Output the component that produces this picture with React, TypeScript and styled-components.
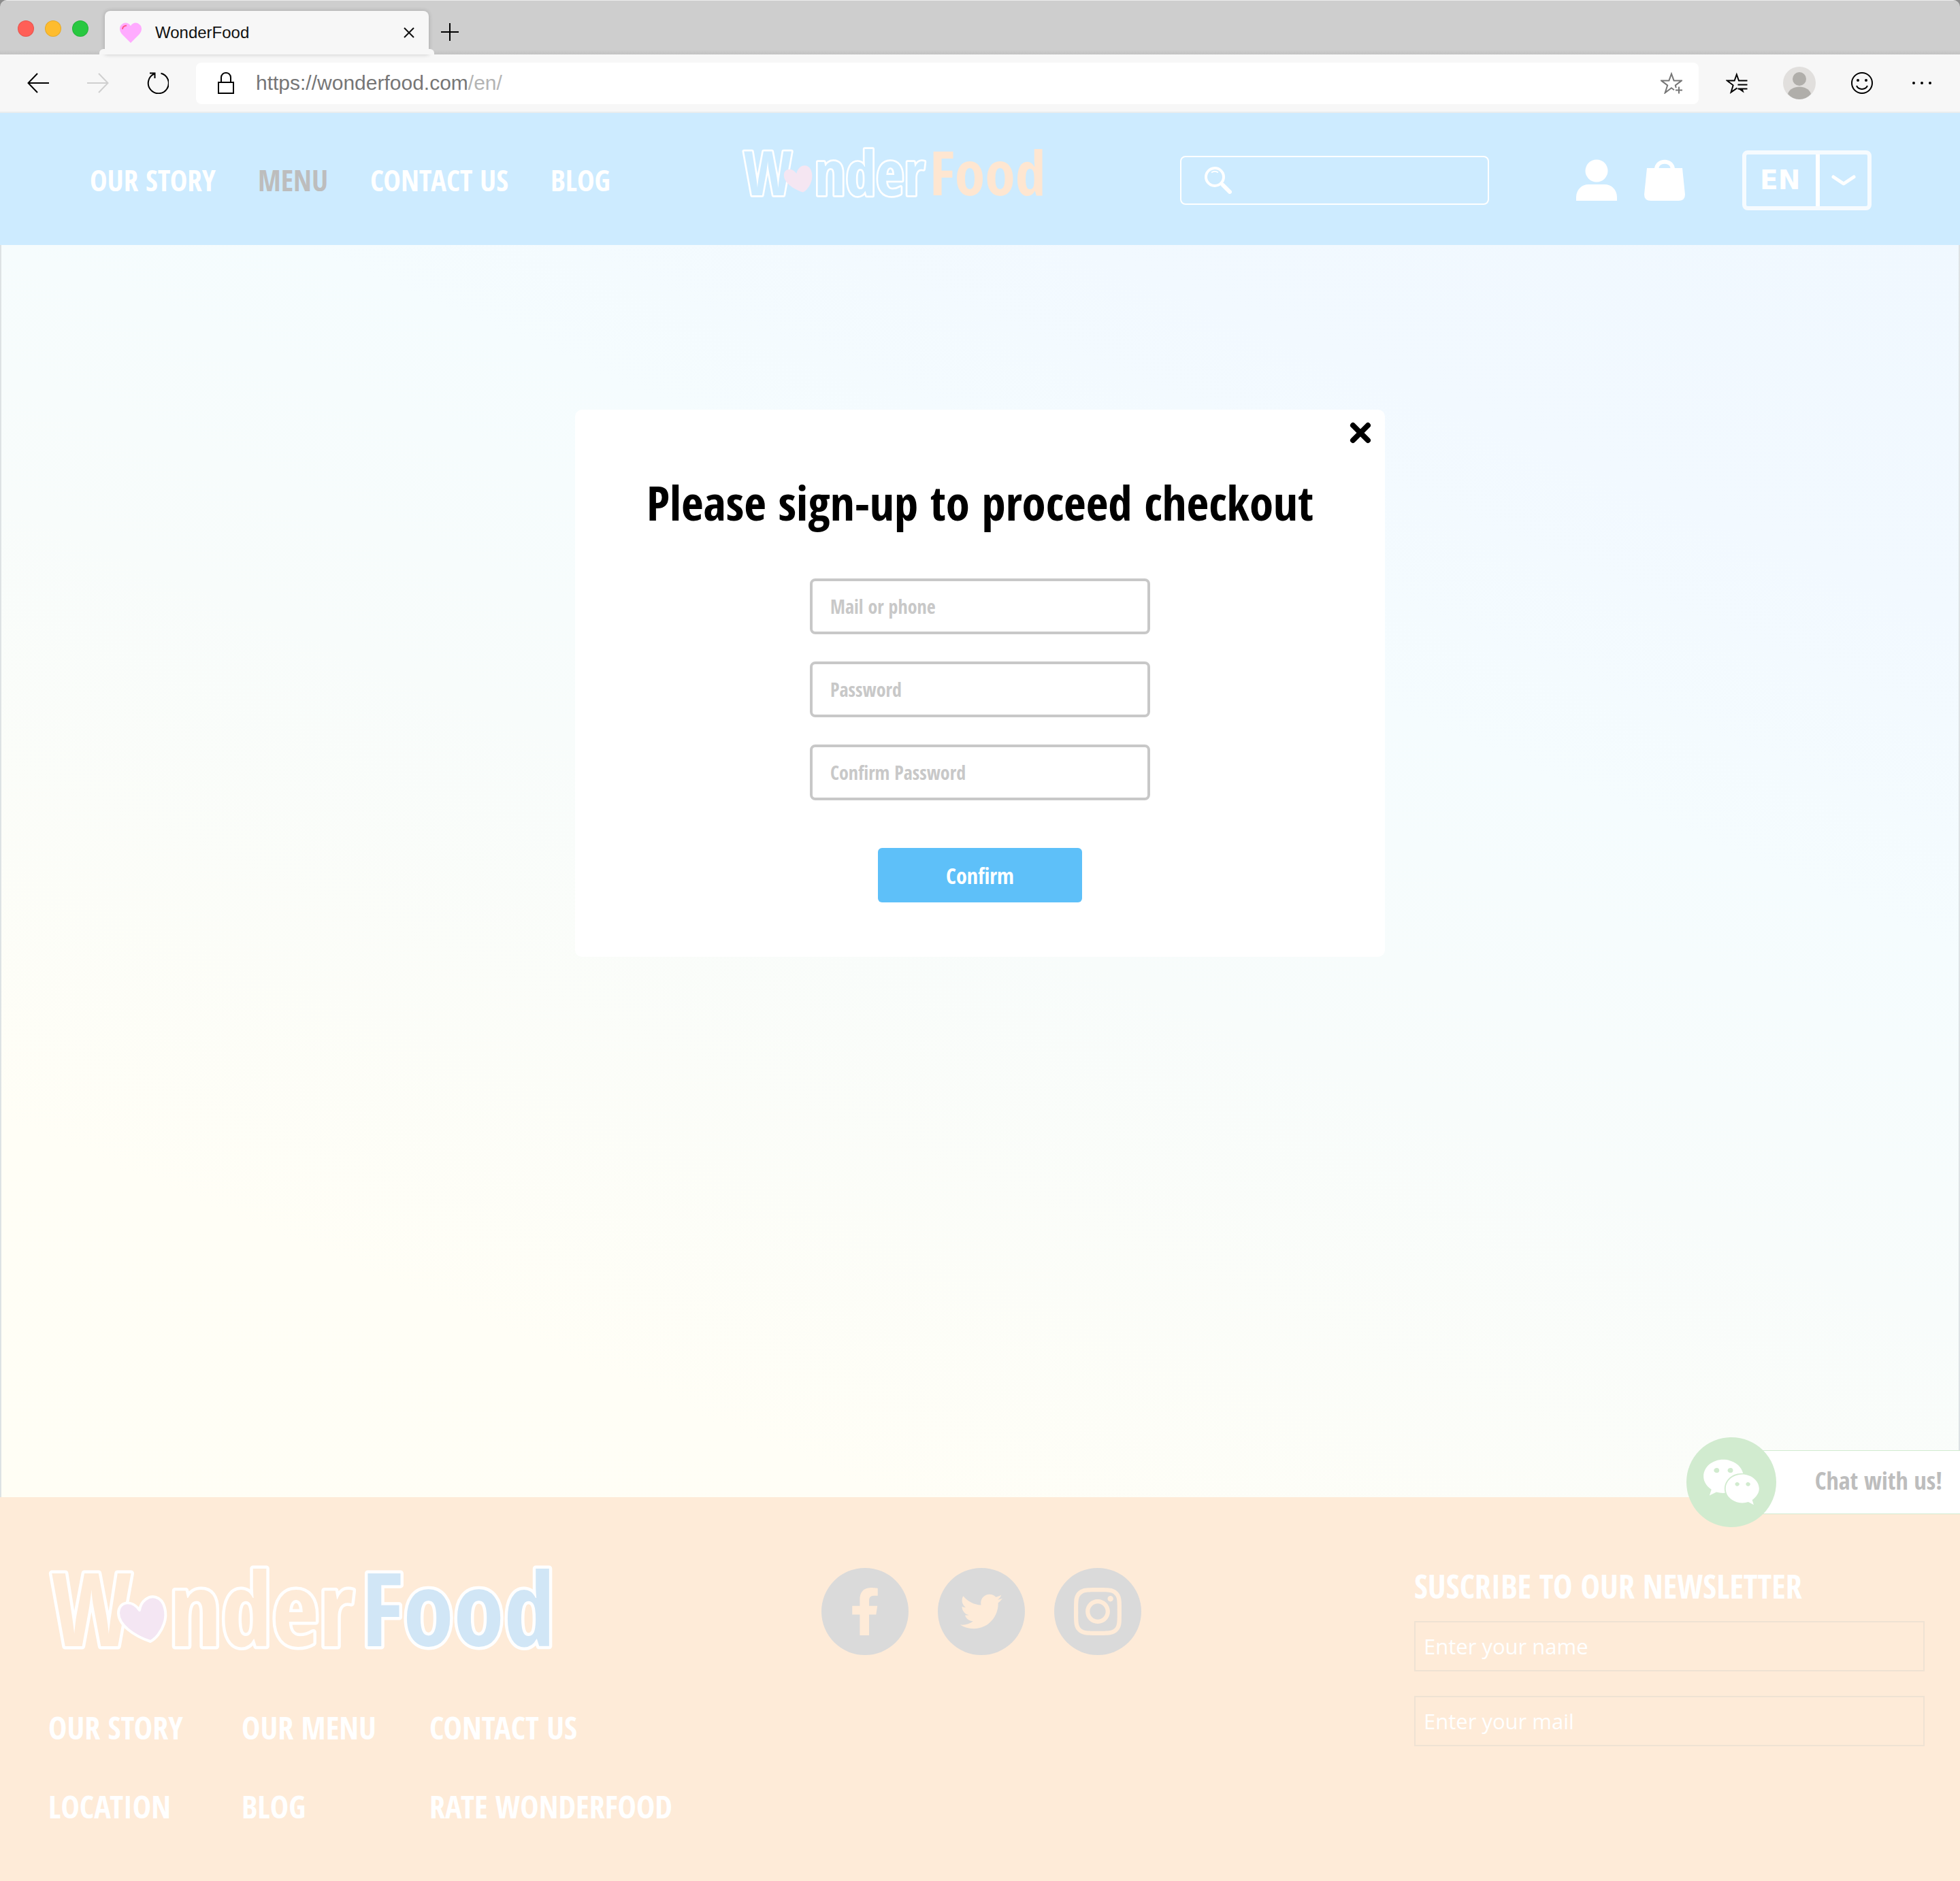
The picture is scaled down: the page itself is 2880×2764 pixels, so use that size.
import React from "react";
import styled, { createGlobalStyle } from "styled-components";
import { FaFacebookF, FaInstagram, FaTwitter, FaWeixin } from "react-icons/fa";

const display = `"Open Sans Condensed", "Roboto Condensed", sans-serif`;
const system = `"Liberation Sans", Arial, sans-serif`;

const GlobalStyle = createGlobalStyle`
  *, *::before, *::after { box-sizing: border-box; }
  body { margin: 0; background: #8c8c8c; font-family: ${display}; font-weight: 700; }
  a { color: inherit; text-decoration: none; }
  button, input, select { font: inherit; color: inherit; margin: 0; padding: 0; border: 0; background: none; border-radius: 0; outline: none; }
  button { cursor: pointer; }
  svg { display: block; flex: none; }
  h1, h2, ul { margin: 0; padding: 0; font: inherit; list-style: none; }
`;

const Page = styled.div`
  display: flex;
  flex-direction: column;
  min-height: 100vh;
  border-radius: 10px 10px 0 0;
  overflow: hidden;
`;

/* ---------- browser chrome ---------- */

const TabStrip = styled.div`
  display: flex;
  align-items: flex-end;
  height: 80px;
  padding-left: 26px;
  border-top: 1px solid #ececec;
  background: linear-gradient(#cecece 0, #cecece 72px, #c0c0c0 80px);
`;

const Lights = styled.div`
  display: flex;
  gap: 16px;
  margin-right: 24px;
  padding-bottom: 26px;
`;

const Light = styled.button<{ $color: string }>`
  width: 24px;
  height: 24px;
  border-radius: 50%;
  background: ${(p) => p.$color};
  box-shadow: inset 0 0 0 1px rgba(0, 0, 0, 0.1);
`;

const Tab = styled.div`
  position: relative;
  display: flex;
  align-items: center;
  gap: 20px;
  width: 476px;
  height: 64px;
  padding: 0 20px 0 22px;
  border-radius: 8px 8px 0 0;
  background: #f7f7f7;
  box-shadow: 0 0 6px rgba(0, 0, 0, 0.2);
  color: #111;
  font: 400 24px/32px ${system};

  &::after {
    content: "";
    position: absolute;
    left: -8px;
    right: -8px;
    bottom: 0;
    height: 8px;
    border-radius: 6px 6px 0 0;
    background: #f7f7f7;
  }
`;

const TabTitle = styled.span`
  flex: 1;
`;

const NewTab = styled.button`
  padding: 0 17px 19px;
`;

const Toolbar = styled.div`
  display: flex;
  align-items: center;
  height: 86px;
  padding: 0 40px;
  border-bottom: 2px solid #e9edee;
  background: #f7f7f7;
`;

const HistoryTools = styled.div`
  display: flex;
  gap: 56px;
`;

const AddressBar = styled.div`
  display: flex;
  flex: 1;
  align-items: center;
  height: 61px;
  margin: 0 40px;
  padding: 0 24px 0 32px;
  border-radius: 8px;
  background: #fff;
  color: #767676;
  font: 400 30px/40px ${system};
`;

const Url = styled.span`
  flex: 1;
  padding-left: 32px;
`;

const UrlPath = styled.span`
  color: #b4b4b4;
`;

const BrowserTools = styled.div`
  display: flex;
  align-items: center;
  gap: 52px;
`;

/* ---------- site header ---------- */

const Header = styled.header`
  display: flex;
  align-items: center;
  justify-content: space-between;
  height: 194px;
  padding: 4px 130px 0 132px;
  background: #cdebff;
  color: #fff;
`;

const Nav = styled.nav`
  display: flex;
  gap: 62px;
  font-size: 43px;
  line-height: 56px;
`;

const NavLink = styled.a<{ $active?: boolean }>`
  color: ${(p) => (p.$active ? "#bdbdbd" : "#fff")};
`;

const HeaderLogo = styled.a`
  padding-bottom: 24px;
`;

const Tools = styled.div`
  display: flex;
  align-items: center;
  gap: 84px;
`;

const SearchBox = styled.label`
  display: flex;
  align-items: center;
  gap: 20px;
  width: 454px;
  height: 72px;
  margin-right: 44px;
  padding: 0 16px 0 34px;
  border: 2px solid #fff;
  border-radius: 8px;
`;

const SearchInput = styled.input`
  flex: 1;
  min-width: 0;
  font-size: 28px;
`;

const IconRow = styled.div`
  display: flex;
  gap: 40px;
`;

const Language = styled.label`
  display: flex;
  width: 190px;
  height: 88px;
  border: 6px solid #f6fbff;
  border-radius: 8px;
`;

const LanguageSelect = styled.select`
  width: 108px;
  padding-left: 20px;
  border-right: 6px solid #fff;
  appearance: none;
  font: 700 39px/56px "DejaVu Sans", sans-serif;
`;

const LanguageArrow = styled.span`
  display: flex;
  flex: 1;
  align-items: center;
  justify-content: center;
`;

/* ---------- sign-up dialog ---------- */

const Main = styled.main`
  position: relative;
  display: flex;
  flex: 1;
  flex-direction: column;
  align-items: center;
  padding: 242px 24px;
  border: solid #dde2e4;
  border-width: 0 2px;
  background: linear-gradient(23deg, #fffef5 0%, #fffef6 18%, #f8fcfb 48%, #f5fcfe 66%, #f2f9ff 82%, #f0f8ff 100%);
`;

const Dialog = styled.form`
  display: flex;
  flex-direction: column;
  align-items: center;
  width: 100%;
  max-width: 1190px;
  padding: 14px 16px 80px;
  border-radius: 10px;
  background: #fff;
`;

const CloseButton = styled.button`
  align-self: flex-end;
  padding: 4px;
`;

const DialogTitle = styled.h1`
  margin: 34px 0 64px;
  color: #000;
  font-size: 71px;
  line-height: 96px;
`;

const Fields = styled.div`
  display: grid;
  gap: 40px;
  width: 500px;
  margin-bottom: 70px;
`;

const FieldLabel = styled.label`
  display: block;
`;

const TextInput = styled.input`
  display: block;
  width: 100%;
  height: 82px;
  padding: 0 26px;
  border: 4px solid #c8c8c8;
  border-radius: 8px;
  color: #444;
  font-size: 28px;

  &::placeholder { color: #c8c8c8; opacity: 1; }
`;

const ConfirmButton = styled.button`
  width: 300px;
  height: 80px;
  border-radius: 6px;
  background: #5ec0f9;
  color: #fff;
  font-size: 32px;
`;

const Chat = styled.a`
  position: absolute;
  right: -2px;
  bottom: -44px;
  display: flex;
  align-items: center;
  color: #bdbdbd;
  font-size: 36px;
  line-height: 48px;
`;

const ChatBadge = styled.span`
  z-index: 1;
  display: flex;
  align-items: center;
  justify-content: center;
  width: 132px;
  height: 132px;
  margin-right: -66px;
  border-radius: 50%;
  background: #d1ebcf;
  color: #fff;

  svg { width: 86px; height: 76px; }
`;

const ChatLabel = styled.span`
  display: flex;
  align-items: center;
  height: 94px;
  padding: 0 26px 4px 123px;
  border: solid #d1ebcf;
  border-width: 1px 0;
  background: #fff;
`;

/* ---------- footer ---------- */

const Footer = styled.footer`
  display: grid;
  grid-template-columns: 1fr auto 1fr;
  align-items: start;
  padding: 56px 52px 78px 55px;
  background: #feebd8;
  color: #fff;
`;

const FooterBrand = styled.div`
  padding-left: 16px;
`;

const FooterLinks = styled.ul`
  display: grid;
  grid-template-columns: 284px 276px auto;
  justify-content: start;
  row-gap: 52px;
  margin-top: 38px;
  font-size: 46px;
  line-height: 64px;
  white-space: nowrap;
`;

const Social = styled.div`
  display: flex;
  gap: 43px;
  padding-top: 48px;
`;

const SocialLink = styled.a<{ $size: number }>`
  display: flex;
  align-items: center;
  justify-content: center;
  width: 128px;
  height: 128px;
  border-radius: 50%;
  background: #dadada;
  color: #feebd8;
  font-size: ${(p) => p.$size}px;
`;

const Newsletter = styled.form`
  display: grid;
  gap: 36px;
  justify-self: end;
  width: 750px;
  padding-top: 44px;
`;

const NewsletterTitle = styled.h2`
  margin-bottom: -16px;
  font-size: 48px;
  line-height: 62px;
`;

const NewsletterInput = styled.input`
  display: block;
  width: 100%;
  height: 74px;
  padding: 0 12px;
  border: 2px solid #efe2d3;
  font: 400 31px/44px "Open Sans", "Noto Sans", sans-serif;

  &::placeholder { color: #fff; opacity: 1; }
`;

/* ---------- drawings ---------- */

const LogoText = styled.text`
  font-family: ${display};
  font-weight: 700;
  font-size: 150px;
  paint-order: stroke;
`;

type LogoProps = { width: number; ground: string; food: string; heart: string; outlined?: boolean };

const Logo = ({ width, ground, food, heart, outlined }: LogoProps) => (
  <svg width={width} viewBox="0 -44 750 212" role="img" aria-label="WonderFood" strokeLinejoin="round">
    <LogoText x="4" y="119" fill={ground} stroke="#fff" strokeWidth="9">W</LogoText>
    <LogoText x="178" y="119" fill={ground} stroke="#fff" strokeWidth="9">nder</LogoText>
    <LogoText x="460" y="119" fill={food} stroke={outlined ? "#fff" : "none"} strokeWidth="9">Food</LogoText>
    <path
      d="M150 112C126 104 103 88 103 70C103 54 122 49 134 66C136 52 148 44 158 47C172 51 175 72 170 86C166 98 158 108 150 112Z"
      fill={heart}
      stroke={outlined ? "#fff" : "none"}
      strokeWidth="4"
    />
  </svg>
);

const Line = styled.svg.attrs({ fill: "none", stroke: "currentColor", strokeWidth: 2 })``;

type FieldProps = { label: string; type: string };

function Field({ label, type }: FieldProps) {
  return (
    <FieldLabel>
      <TextInput type={type} placeholder={label} aria-label={label} />
    </FieldLabel>
  );
}

function NewsletterField({ label, type }: FieldProps) {
  return (
    <FieldLabel>
      <NewsletterInput type={type} placeholder={label} aria-label={label} />
    </FieldLabel>
  );
}

function BrowserChrome() {
  return (
    <>
      <TabStrip>
        <Lights>
          <Light $color="#ff5f57" aria-label="Close window" />
          <Light $color="#febc2e" aria-label="Minimise window" />
          <Light $color="#28c840" aria-label="Zoom window" />
        </Lights>
        <Tab>
          <svg width="32" height="30" viewBox="0 0 32 30">
            <path d="M16 30L3 17C-1 12-1 6 3 3C7-1 13 0 16 5C19 0 25-1 29 3C33 6 33 12 29 17Z" fill="#ffabff" />
            <path d="M4 10C4 7 6 5 10 4.500" fill="none" stroke="#ff5a8a" strokeWidth="2" />
          </svg>
          <TabTitle>WonderFood</TabTitle>
          <button type="button" aria-label="Close tab">
            <Line width="18" height="18" viewBox="0 0 18 18"><path d="M2 2L16 16M16 2L2 16" /></Line>
          </button>
        </Tab>
        <NewTab type="button" aria-label="New tab">
          <Line width="28" height="28" viewBox="0 0 28 28"><path d="M14 1V27M1 14H27" /></Line>
        </NewTab>
      </TabStrip>
      <Toolbar>
        <HistoryTools>
          <button type="button" aria-label="Back">
            <Line width="32" height="32" viewBox="0 0 32 32"><path d="M15 2L1.500 16L15 30M1.500 16H32" /></Line>
          </button>
          <button type="button" aria-label="Forward">
            <Line width="32" height="32" viewBox="0 0 32 32" color="#cfcfcf"><path d="M17 2L30.500 16L17 30M30.500 16H0" /></Line>
          </button>
          <button type="button" aria-label="Reload">
            <Line width="32" height="32" viewBox="0 0 32 32"><path d="M20.500 1.700A15 15 0 1 1 11 2.400M4 1.500H11.500V9" /></Line>
          </button>
        </HistoryTools>
        <AddressBar>
          <Line width="24" height="32" viewBox="0 0 24 32" color="#000">
            <path d="M1 15H23V31H1ZM5 15V8C5 -1.300 19 -1.300 19 8V15" />
          </Line>
          <Url>https://wonderfood.com<UrlPath>/en/</UrlPath></Url>
          <button type="button" aria-label="Add to favourites">
            <Line width="32" height="32" viewBox="0 0 32 32">
              <path d="M20 26.300L16 23.300L6.700 30.300L10.200 19.400L1 12.400H12.400L16 2.500L19.600 12.400H31L21.800 19.400L22.800 23M27 21.500V31.500M22 26.500H32" />
            </Line>
          </button>
        </AddressBar>
        <BrowserTools>
          <button type="button" aria-label="Favourites">
            <Line width="32" height="32" viewBox="0 0 33 32">
              <path d="M17 23.600L7.800 30L11 19.400L2 12.400H13L16.300 3L19.600 12.400H32.500M18 18.500H32.500M18 24.700H32.500" />
              <path d="M19 25L27.500 31L25.500 25Z" fill="currentColor" stroke="none" />
            </Line>
          </button>
          <button type="button" aria-label="Profile">
            <svg width="48" height="48" viewBox="0 0 48 48">
              <circle cx="24" cy="24" r="24" fill="#e1dfdd" />
              <circle cx="24" cy="18" r="10" fill="#b0aeaa" />
              <path d="M7 40C11 26 37 26 41 40C32 50.500 16 50.500 7 40Z" fill="#b0aeaa" />
            </svg>
          </button>
          <button type="button" aria-label="Feedback">
            <Line width="32" height="32" viewBox="0 0 32 32">
              <circle cx="16" cy="16" r="15" />
              <path d="M8 20C11 26.500 21 26.500 24 20" />
              <circle cx="10" cy="12" r="2" fill="currentColor" stroke="none" />
              <circle cx="22" cy="12" r="2" fill="currentColor" stroke="none" />
            </Line>
          </button>
          <button type="button" aria-label="More">
            <svg width="36" height="32" viewBox="0 0 36 32">
              <circle cx="8" cy="16" r="2" /><circle cx="20" cy="16" r="2" /><circle cx="32" cy="16" r="2" />
            </svg>
          </button>
        </BrowserTools>
      </Toolbar>
    </>
  );
}

function SiteHeader() {
  return (
    <Header>
      <Nav>
        <NavLink href="#story">OUR STORY</NavLink>
        <NavLink href="#menu" $active>MENU</NavLink>
        <NavLink href="#contact">CONTACT US</NavLink>
        <NavLink href="#blog">BLOG</NavLink>
      </Nav>
      <HeaderLogo href="#home">
        <Logo width={450} ground="#cdebff" food="#fee6d1" heart="#f5e6f2" />
      </HeaderLogo>
      <Tools>
        <SearchBox>
          <Line width="40" height="40" viewBox="0 0 40 40">
            <circle cx="15" cy="15" r="13" strokeWidth="4" />
            <path d="M10 8.500Q15 5 20 8.500" strokeWidth="2" />
            <path d="M27 27L37 37" strokeWidth="6" strokeLinecap="round" />
          </Line>
          <SearchInput type="search" aria-label="Search" />
        </SearchBox>
        <IconRow>
          <a href="#account" aria-label="Account">
            <svg width="60" height="62" viewBox="0 0 60 62" fill="#fff">
              <circle cx="30" cy="17" r="16.500" />
              <path d="M0 61V56C0 44 9 37 18 37H42C51 37 60 44 60 56V61Z" />
            </svg>
          </a>
          <a href="#bag" aria-label="Shopping bag">
            <svg width="60" height="62" viewBox="0 0 60 62" fill="#fff">
              <path d="M4 13H56L60 52Q60 61 50 61H10Q0 61 0 52Z" />
              <path d="M18 15C18 0 42 0 42 15" fill="none" stroke="#fff" strokeWidth="6" />
            </svg>
          </a>
        </IconRow>
        <Language>
          <LanguageSelect aria-label="Language" defaultValue="EN">
            <option>EN</option>
          </LanguageSelect>
          <LanguageArrow>
            <Line width="36" height="18" viewBox="0 0 36 18">
              <path d="M3 4L18 14L33 4" strokeWidth="5" strokeLinecap="round" strokeLinejoin="round" />
            </Line>
          </LanguageArrow>
        </Language>
      </Tools>
    </Header>
  );
}

function SignUp() {
  return (
    <Dialog onSubmit={(e) => e.preventDefault()}>
      <CloseButton type="button" aria-label="Close">
        <svg width="32" height="32" viewBox="0 0 32 32" stroke="#000" strokeWidth="8" strokeLinecap="round">
          <path d="M5 5L27 27M27 5L5 27" />
        </svg>
      </CloseButton>
      <DialogTitle>Please sign-up to proceed checkout</DialogTitle>
      <Fields>
        <Field label="Mail or phone" type="text" />
        <Field label="Password" type="password" />
        <Field label="Confirm Password" type="password" />
      </Fields>
      <ConfirmButton type="submit">Confirm</ConfirmButton>
    </Dialog>
  );
}

function SiteFooter() {
  const links = ["OUR STORY", "OUR MENU", "CONTACT US", "LOCATION", "BLOG", "RATE WONDERFOOD"];
  return (
    <Footer>
      <FooterBrand>
        <Logo width={750} ground="#feebd8" food="#d1e6f6" heart="#f4e6f3" outlined />
        <FooterLinks>
          {links.map((text) => (
            <li key={text}><a href="#footer">{text}</a></li>
          ))}
        </FooterLinks>
      </FooterBrand>
      <Social>
        <SocialLink $size={70} href="#facebook" aria-label="Facebook"><FaFacebookF /></SocialLink>
        <SocialLink $size={62} href="#twitter" aria-label="Twitter"><FaTwitter /></SocialLink>
        <SocialLink $size={80} href="#instagram" aria-label="Instagram"><FaInstagram /></SocialLink>
      </Social>
      <Newsletter onSubmit={(e) => e.preventDefault()}>
        <NewsletterTitle>SUSCRIBE TO OUR NEWSLETTER</NewsletterTitle>
        <NewsletterField label="Enter your name" type="text" />
        <NewsletterField label="Enter your mail" type="email" />
      </Newsletter>
    </Footer>
  );
}

export default function App() {
  return (
    <Page>
      <GlobalStyle />
      <BrowserChrome />
      <SiteHeader />
      <Main>
        <SignUp />
        <Chat href="#chat">
          <ChatBadge><FaWeixin /></ChatBadge>
          <ChatLabel>Chat with us!</ChatLabel>
        </Chat>
      </Main>
      <SiteFooter />
    </Page>
  );
}
